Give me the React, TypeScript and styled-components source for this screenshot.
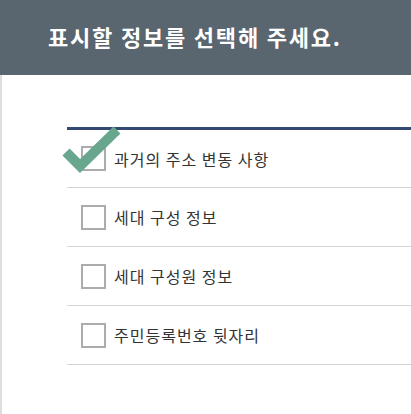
import React, { useState } from 'react';
import styled, { createGlobalStyle } from 'styled-components';

const GlobalStyle = createGlobalStyle`
  html, body {
    margin: 0;
    padding: 0;
    background: #ffffff;
    font-family: "Noto Sans CJK KR", "Noto Sans", sans-serif;
  }
`;

const Page = styled.div`
  width: 411px;
  height: 414px;
  display: flex;
  flex-direction: column;
  overflow: hidden;
`;

const Header = styled.header`
  height: 75px;
  flex-shrink: 0;
  background-color: #59656f;
  display: flex;
  align-items: center;
  padding-left: 48px;
  box-sizing: border-box;
`;

const Title = styled.h1`
  margin: 0;
  color: #ffffff;
  font-size: 22px;
  font-weight: 700;
  letter-spacing: 1.8px;
  line-height: 1;
  padding-bottom: 3px;
`;

const Body = styled.main`
  flex: 1;
  border-left: 2px solid #dedede;
  padding: 52px 0 0 65px;
`;

const List = styled.ul`
  list-style: none;
  margin: 0;
  padding: 0;
  border-top: 3px solid #34496f;
`;

const Row = styled.li`
  height: 58px;
  display: flex;
  align-items: center;
  padding-left: 14px;
  border-bottom: 1.5px solid #d6d6d6;
  cursor: pointer;
  &:first-child {
    height: 57px;
  }
`;

const Box = styled.span`
  position: relative;
  width: 25px;
  height: 25px;
  box-sizing: border-box;
  border: 2px solid #acacac;
  background: #ffffff;
  flex-shrink: 0;
  margin-right: 8px;
`;

const Check = styled.svg`
  position: absolute;
  left: -21px;
  top: -17px;
  width: 60px;
  height: 48px;
  overflow: visible;
`;

const Label = styled.span`
  font-size: 16px;
  color: #333333;
  letter-spacing: 1px;
`;

const items = [
  '과거의 주소 변동 사항',
  '세대 구성 정보',
  '세대 구성원 정보',
  '주민등록번호 뒷자리',
];

const App: React.FC = () => {
  const [checked, setChecked] = useState<boolean[]>([true, false, false, false]);

  const toggle = (i: number) =>
    setChecked((prev) => prev.map((v, j) => (j === i ? !v : v)));

  return (
    <Page>
      <GlobalStyle />
      <Header>
        <Title>표시할 정보를 선택해 주세요.</Title>
      </Header>
      <Body>
        <List>
          {items.map((text, i) => (
            <Row key={text} onClick={() => toggle(i)}>
              <Box>
                {checked[i] && (
                  <Check viewBox="0 0 60 48">
                    <path
                      d="M4 21 L18 35 L55 -1"
                      fill="none"
                      stroke="#68a68e"
                      strokeWidth="10"
                      strokeLinejoin="miter"
                    />
                  </Check>
                )}
              </Box>
              <Label>{text}</Label>
            </Row>
          ))}
        </List>
      </Body>
    </Page>
  );
};

export default App;
